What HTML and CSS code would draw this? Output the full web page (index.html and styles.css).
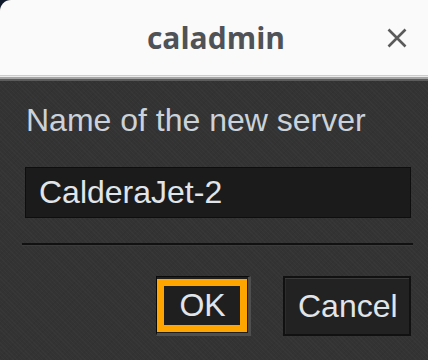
FILE: index.html
```html
<!DOCTYPE html>
<html lang="en">
<head>
<meta charset="utf-8">
<title>caladmin</title>
<link rel="stylesheet" href="styles.css">
</head>
<body>
<div class="window">
  <header class="titlebar">
    <span class="spacer"></span>
    <span class="title">caladmin</span>
    <span class="close-wrap">
      <button class="close" aria-label="Close">
        <svg width="20" height="20" viewBox="0 0 20 20">
          <path d="M1.5 1.5 L18.5 18.5 M18.5 1.5 L1.5 18.5" stroke="#5a5a5a" stroke-width="2.6" stroke-linecap="butt" fill="none"/>
        </svg>
      </button>
    </span>
  </header>
  <main class="content">
    <label class="label">Name of the new server</label>
    <div class="input">CalderaJet-2</div>
    <div class="sep"></div>
    <div class="actions">
      <button class="btn btn-ok">OK</button>
      <button class="btn btn-cancel">Cancel</button>
    </div>
  </main>
</div>
</body>
</html>
```
FILE: styles.css
```css
html, body {
  margin: 0;
  padding: 0;
  width: 428px;
  height: 360px;
  overflow: hidden;
  background: #0f1a2c;
}

.window {
  width: 428px;
  height: 360px;
  display: flex;
  flex-direction: column;
  border-top-left-radius: 11px;
  overflow: hidden;
  background-color: #333333;
  background-image:
    repeating-linear-gradient(45deg, rgba(255,255,255,0.018) 0 1px, rgba(0,0,0,0) 1px 3px),
    repeating-linear-gradient(-45deg, rgba(0,0,0,0.03) 0 1px, rgba(0,0,0,0) 1px 4px);
}

.titlebar {
  height: 81px;
  flex: none;
  display: grid;
  grid-template-columns: 1fr auto 1fr;
  align-items: center;
  padding-bottom: 6px;
  box-sizing: border-box;
  background: linear-gradient(to bottom,
    #fafafa 0, #fafafa 75px,
    #cdcdcd 75px, #cdcdcd 76px,
    #ebebeb 76px, #ebebeb 77px,
    #a4a4a4 77px, #a4a4a4 79px,
    #5c5c5c 79px, #5c5c5c 81px);
}

.title {
  font-family: "Open Sans", "DejaVu Sans", sans-serif;
  font-weight: 700;
  font-size: 30px;
  line-height: 30px;
  color: #4f5256;
  padding-left: 4px;
}

.close-wrap {
  display: flex;
  justify-content: flex-end;
  padding-right: 21px;
}

.close {
  width: 20px;
  height: 20px;
  padding: 0;
  margin: 0;
  border: 0;
  background: none;
  display: block;
}

.close svg { display: block; }

.content {
  flex: 1;
  display: flex;
  flex-direction: column;
  padding: 21px 17px 0 25px;
  font-family: "Liberation Sans", Arial, sans-serif;
  font-size: 32px;
  line-height: 37px;
}

.label {
  color: #cbd2d9;
  padding-left: 1px;
}

.input {
  margin-top: 28px;
  height: 51px;
  box-sizing: border-box;
  border: 1px solid #0e0e0e;
  background: #1b1b1b;
  color: #e1e5e9;
  padding: 6px 13px 0;
}

.sep {
  margin: 25px -2px 0 -3px;
  height: 2px;
  background: #111111;
  box-shadow: 0 1px 0 #3c3c3c;
}

.actions {
  margin-top: 31px;
  display: flex;
  justify-content: flex-end;
  gap: 32px;
}

.btn {
  position: relative;
  height: 60px;
  box-sizing: border-box;
  font-family: "Liberation Sans", Arial, sans-serif;
  font-size: 32px;
  line-height: 37px;
  color: #e1e5e9;
  background: #1f1f1f;
  padding: 0 13px;
  margin: 0;
}

.btn-ok {
  width: 95px;
  border-style: solid;
  border-width: 1px 3px 3px 1px;
  border-color: #0a0a0a #4e4e4e #4e4e4e #0a0a0a;
}

.btn-ok::after {
  content: "";
  position: absolute;
  top: 2px;
  left: 0;
  right: 1px;
  bottom: 1px;
  border: 7px solid #ffa500;
}

.btn-cancel {
  width: 128px;
  border: 2px solid #111111;
  box-shadow: inset 0 1px 0 #3a3a3a, inset 1px 0 0 #2c2c2c;
  background: #222222;
}
```
